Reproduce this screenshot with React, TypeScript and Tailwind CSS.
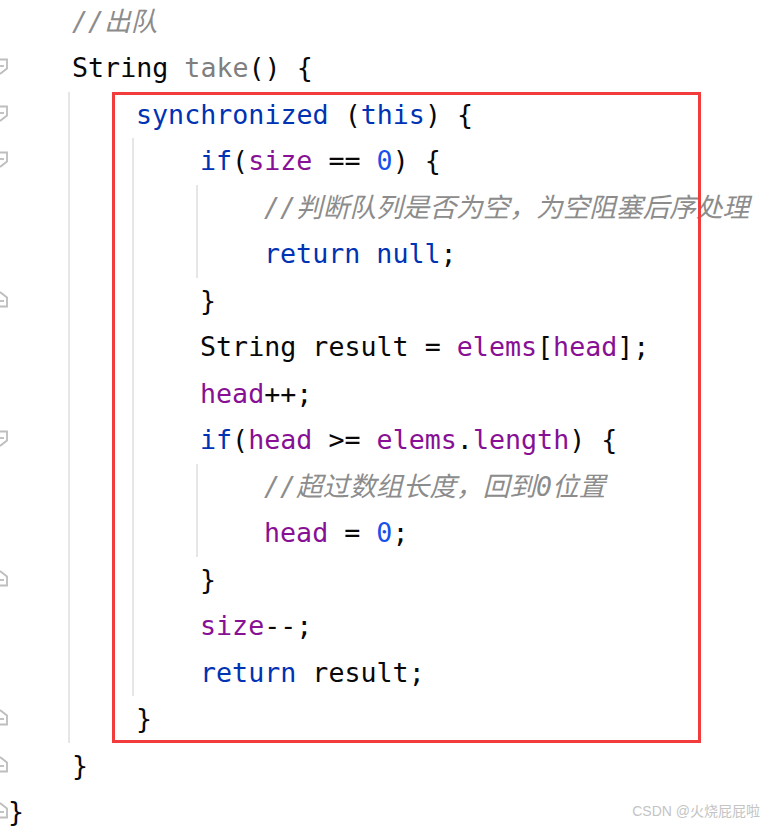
type Tok = [string, string?];

type Line = {
  indent: number;
  fold?: 'open' | 'close';
  toks: Tok[];
};

const KW = 'text-[#0033b3]';
const FIELD = 'text-[#871094]';
const NUM = 'text-[#1750eb]';
const COMMENT = 'text-[#8c8c8c] italic';
const DIM = 'text-[#7f7f7f]';

const lines: Line[] = [
  { indent: 1, toks: [['//出队', COMMENT]] },
  { indent: 1, fold: 'open', toks: [['String '], ['take', DIM], ['() {']] },
  { indent: 2, fold: 'open', toks: [['synchronized', KW], [' ('], ['this', KW], [') {']] },
  { indent: 3, fold: 'open', toks: [['if', KW], ['('], ['size', FIELD], [' == '], ['0', NUM], [') {']] },
  { indent: 4, toks: [['//判断队列是否为空，为空阻塞后序处理', COMMENT]] },
  { indent: 4, toks: [['return', KW], [' '], ['null', KW], [';']] },
  { indent: 3, fold: 'close', toks: [['}']] },
  { indent: 3, toks: [['String result = '], ['elems', FIELD], ['['], ['head', FIELD], ['];']] },
  { indent: 3, toks: [['head', FIELD], ['++;']] },
  {
    indent: 3,
    fold: 'open',
    toks: [['if', KW], ['('], ['head', FIELD], [' >= '], ['elems', FIELD], ['.'], ['length', FIELD], [') {']],
  },
  { indent: 4, toks: [['//超过数组长度，回到0位置', COMMENT]] },
  { indent: 4, toks: [['head', FIELD], [' = '], ['0', NUM], [';']] },
  { indent: 3, fold: 'close', toks: [['}']] },
  { indent: 3, toks: [['size', FIELD], ['--;']] },
  { indent: 3, toks: [['return', KW], [' result;']] },
  { indent: 2, fold: 'close', toks: [['}']] },
  { indent: 1, fold: 'close', toks: [['}']] },
  { indent: 0, fold: 'close', toks: [['}']] },
];

// gutter fold marker, only its right half shows at the window edge
function FoldIcon({ kind }: { kind: 'open' | 'close' }) {
  return (
    <svg
      width="9"
      height="17"
      viewBox="0 0 9 17"
      className="absolute left-0 top-[13px]"
      fill="none"
      stroke="#bdbdbd"
      strokeWidth="1.8"
    >
      {kind === 'open' ? (
        <>
          <path d="M0 1.5H7V10.5L0 16" />
          <path d="M0 8H4" />
        </>
      ) : (
        <>
          <path d="M0 1L7 6.5V15.5H0" />
          <path d="M0 10H4" />
        </>
      )}
    </svg>
  );
}

function CodeLine({ line }: { line: Line }) {
  const levels = Array.from({ length: line.indent }, (_, i) => i);
  return (
    <div className="relative flex h-[46.5px] items-center whitespace-pre">
      {line.fold && <FoldIcon kind={line.fold} />}
      <div className="w-[4px] shrink-0" />
      {levels.map((k) => (
        <div
          key={k}
          className={
            k === 0 ? 'h-full w-[64px] shrink-0' : 'h-full w-[64px] shrink-0 border-l-2 border-[#e6e6e6]'
          }
        />
      ))}
      <span className="pl-[4px] text-[#080808]">
        {line.toks.map(([text, cls], i) => (
          <span key={i} className={cls}>
            {text}
          </span>
        ))}
      </span>
    </div>
  );
}

export default function App() {
  return (
    <div className="relative h-[827px] w-[767px] overflow-hidden bg-white">
      <div className="mt-[-1.5px] font-['DejaVu_Sans_Mono','Noto_Sans_CJK_SC',monospace] text-[26.67px] leading-[46.5px]">
        {lines.map((line, i) => (
          <CodeLine key={i} line={line} />
        ))}
      </div>

      <div className="pointer-events-none absolute left-[112px] top-[92px] z-10 h-[651px] w-[589px] border-[3px] border-[#f23c3c]" />

      <div className="absolute bottom-[7px] right-[7px] font-['Liberation_Sans','Noto_Sans_CJK_SC',sans-serif] text-[14px] leading-[18px] text-[#c4c4c4]">
        CSDN @火烧屁屁啦
      </div>
    </div>
  );
}
